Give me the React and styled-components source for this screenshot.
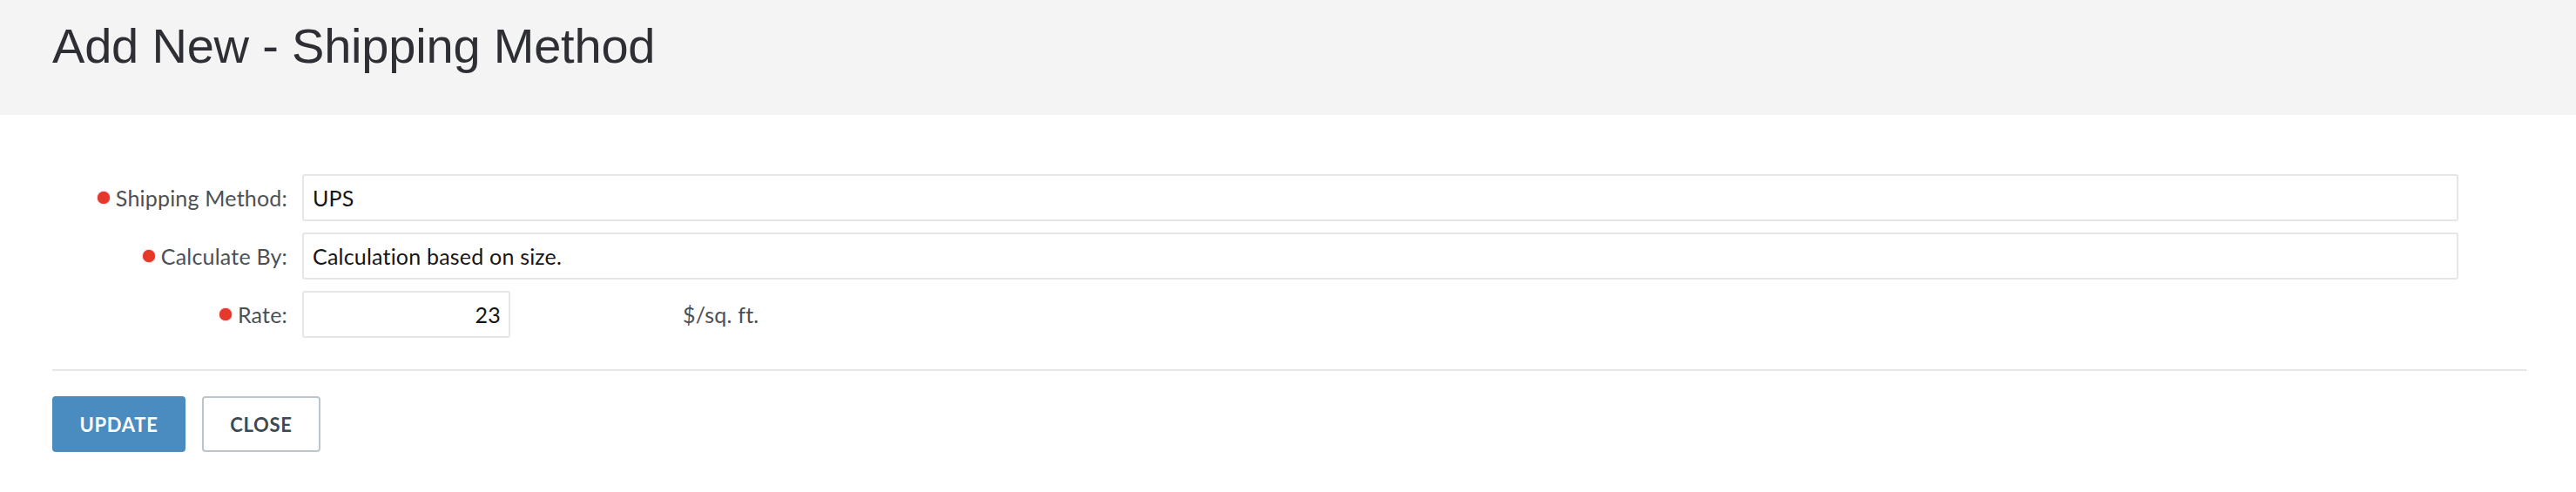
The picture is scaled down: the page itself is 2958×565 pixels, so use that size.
import React from 'react'
import styled, { createGlobalStyle } from 'styled-components'

const GlobalStyle = createGlobalStyle`
    html, body {
        margin: 0;
        padding: 0;
        background: #ffffff;
    }
    * {
        box-sizing: border-box;
    }
`

const Page = styled.div`
    width: 100%;
    min-height: 565px;
    background: #ffffff;
    font-family: Lato, "Open Sans", sans-serif;
`

const Header = styled.div`
    height: 132px;
    background: #f4f4f4;
    padding: 25px 0 0 60px;
`

const Title = styled.h1`
    margin: 0;
    font-family: "Liberation Sans", Arial, sans-serif;
    font-weight: 300;
    font-size: 56px;
    line-height: 56px;
    color: #2e2f34;
    letter-spacing: -0.2px;
`

const Body = styled.div`
    padding: 68px 57px 0 60px;
`

const Form = styled.div`
    display: flex;
    flex-direction: column;
    gap: 13px;
    padding-right: 78px;
`

const Row = styled.div`
    display: flex;
    align-items: center;
`

const Label = styled.label`
    width: 287px;
    flex: none;
    display: flex;
    align-items: center;
    justify-content: flex-end;
    gap: 7px;
    padding-right: 17px;
    font-size: 25px;
    letter-spacing: 0.2px;
    color: #4b5056;
`

const Dot = styled.span`
    width: 14px;
    height: 14px;
    border-radius: 50%;
    background: #e6372b;
    box-shadow: 0 0 1.5px #e6372b;
`

const Input = styled.div`
    height: 54px;
    flex: ${p => (p.$width ? 'none' : '1')};
    width: ${p => p.$width || 'auto'};
    border: 2px solid #e6e6e6;
    border-radius: 3px;
    display: flex;
    align-items: center;
    justify-content: ${p => (p.$right ? 'flex-end' : 'flex-start')};
    padding: 0 9px 0 10px;
    font-size: 25px;
    letter-spacing: 0.2px;
    color: #151515;
`

const Unit = styled.span`
    margin-left: 198px;
    font-size: 25px;
    letter-spacing: 0.2px;
    color: #4b5056;
`

const Divider = styled.hr`
    margin: 36px 0 0 0;
    border: none;
    border-top: 2px solid #e6e6e6;
`

const Actions = styled.div`
    display: flex;
    gap: 19px;
    padding-top: 29px;
`

const Button = styled.button`
    height: 64px;
    width: ${p => p.$width};
    border-radius: 4px;
    font-family: Lato, "Open Sans", sans-serif;
    font-weight: 700;
    font-size: 22px;
    letter-spacing: 0.7px;
    cursor: pointer;
    background: ${p => (p.$primary ? '#4a8cc0' : '#ffffff')};
    color: ${p => (p.$primary ? '#ffffff' : '#3e4a52')};
    border: 2px solid ${p => (p.$primary ? '#4a8cc0' : '#bcc5cb')};
`

export default function App() {
    return (
        <Page>
            <GlobalStyle />
            <Header>
                <Title>Add New - Shipping Method</Title>
            </Header>
            <Body>
                <Form>
                    <Row>
                        <Label><Dot />Shipping Method:</Label>
                        <Input>UPS</Input>
                    </Row>
                    <Row>
                        <Label><Dot />Calculate By:</Label>
                        <Input>Calculation based on size.</Input>
                    </Row>
                    <Row>
                        <Label><Dot />Rate:</Label>
                        <Input $width="239px" $right>23</Input>
                        <Unit>$/sq. ft.</Unit>
                    </Row>
                </Form>
                <Divider />
                <Actions>
                    <Button $primary $width="153px">UPDATE</Button>
                    <Button $width="136px">CLOSE</Button>
                </Actions>
            </Body>
        </Page>
    )
}
